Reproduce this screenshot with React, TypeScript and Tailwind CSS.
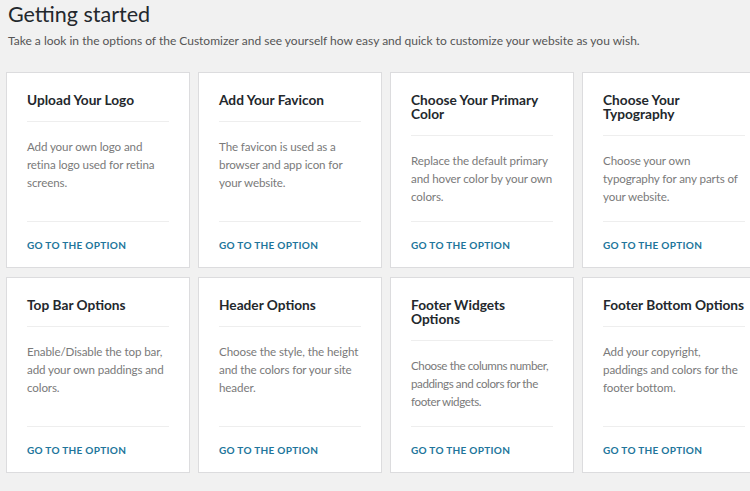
const cards = [
  { title: "Upload Your Logo", text: "Add your own logo and retina logo used for retina screens." },
  { title: "Add Your Favicon", text: "The favicon is used as a browser and app icon for your website." },
  { title: "Choose Your Primary Color", text: "Replace the default primary and hover color by your own colors." },
  { title: "Choose Your Typography", text: "Choose your own typography for any parts of your website." },
  { title: "Top Bar Options", text: "Enable/Disable the top bar, add your own paddings and colors." },
  { title: "Header Options", text: "Choose the style, the height and the colors for your site header." },
  { title: "Footer Widgets Options", text: "Choose the columns number, paddings and colors for the footer widgets.", tight: true },
  { title: "Footer Bottom Options", text: "Add your copyright, paddings and colors for the footer bottom." },
];

export default function App() {
  return (
    <div
      className="h-[491px] w-[750px] overflow-hidden bg-[#f1f1f1] text-[#23282d]"
      style={{ fontFamily: 'Lato, "Noto Sans", sans-serif' }}
    >
      <div className="px-2">
        <h1 className="text-[21.5px] font-normal leading-[28px]">Getting started</h1>
        <p className="mt-[4px] text-[12px] leading-[18px] text-[#555]">
          Take a look in the options of the Customizer and see yourself how easy and quick to customize your website as you wish.
        </p>
      </div>

      <div className="ml-[6px] mt-[22px] grid w-[800px] grid-cols-[repeat(4,184px)] gap-x-2 gap-y-[9px]">
        {cards.map((card) => (
          <div key={card.title} className="flex h-[196px] flex-col border border-[#dcdcde] bg-white px-5">
            <h3 className="border-b border-[#eee] pb-[14px] pt-[20px] text-[13.7px] font-bold leading-[14px] text-[#23282d]">
              {card.title}
            </h3>
            <p
              className={
                card.tight
                  ? "flex-1 pt-[16px] text-[11.6px] leading-[18px] tracking-[-0.035em] text-[#7a7a7a]"
                  : "flex-1 pt-[16px] text-[11.6px] leading-[18px] tracking-[-0.01em] text-[#7a7a7a]"
              }
            >
              {card.text}
            </p>
            <div className="border-t border-[#eee] pb-[16px] pt-[17px]">
              <a href="#" className="block text-[10px] font-bold uppercase leading-[12px] tracking-[0.03em] text-[#21759b]">
                Go to the option
              </a>
            </div>
          </div>
        ))}
      </div>
    </div>
  );
}
